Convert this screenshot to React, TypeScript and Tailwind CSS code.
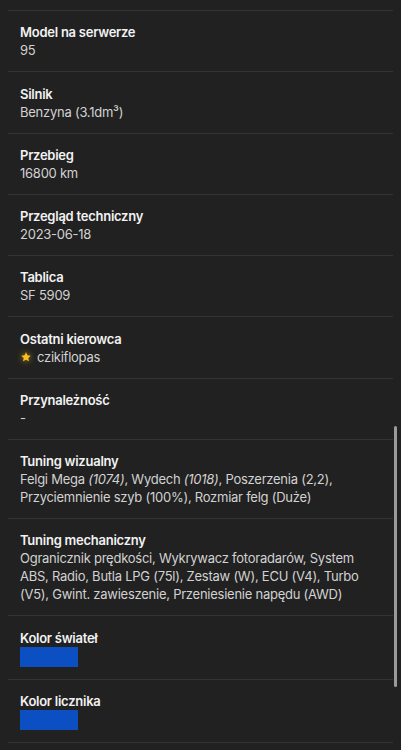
import type { ReactNode } from "react";

interface RowProps {
  label: string;
  children: ReactNode;
}

// Pojedynczy wiersz z etykietą i wartością
function InfoRow({ label, children }: RowProps) {
  return (
    <div className="border-b border-[#343434] px-3 pt-[12.25px] pb-3 tracking-[-0.25px]">
      <div className="text-[13px] leading-[18px] font-semibold text-[#f2f2f2]">{label}</div>
      <div className="text-[13px] leading-[18px] text-[#d2d2d2]">{children}</div>
    </div>
  );
}

function Swatch({ color }: { color: string }) {
  return <div className="h-5 w-[58px]" style={{ backgroundColor: color }} />;
}

function Star() {
  return (
    <svg viewBox="0 0 24 24" className="h-[12px] w-[12px] drop-shadow-[0_0_3px_rgba(250,190,30,0.7)]">
      <path
        d="M12 2.5l2.9 6.1 6.6.8-4.9 4.6 1.3 6.6L12 17.3l-5.9 3.3 1.3-6.6-4.9-4.6 6.6-.8z"
        fill="#f7c21b"
      />
    </svg>
  );
}

export default function App() {
  return (
    <div
      className="relative min-h-[750px] overflow-hidden bg-[#212121]"
      style={{ fontFamily: "Inter, 'Noto Sans', sans-serif" }}
    >
      <div className="mx-2">
        <div className="h-[11px] border-b border-[#343434]" />
        <InfoRow label="Model na serwerze">95</InfoRow>
        <InfoRow label="Silnik">Benzyna (3.1dm³)</InfoRow>
        <InfoRow label="Przebieg">16800 km</InfoRow>
        <InfoRow label="Przegląd techniczny">2023-06-18</InfoRow>
        <InfoRow label="Tablica">SF 5909</InfoRow>
        <InfoRow label="Ostatni kierowca">
          <span className="flex items-center gap-[5px]">
            <Star />
            czikiflopas
          </span>
        </InfoRow>
        <InfoRow label="Przynależność">-</InfoRow>
        <InfoRow label="Tuning wizualny">
          Felgi Mega <i>(1074)</i>, Wydech <i>(1018)</i>, Poszerzenia (2,2), Przyciemnienie szyb (100%),
          Rozmiar felg (Duże)
        </InfoRow>
        <InfoRow label="Tuning mechaniczny">
          Ogranicznik prędkości, Wykrywacz fotoradarów, System ABS, Radio, Butla LPG (75l), Zestaw (W),
          ECU (V4), Turbo (V5), Gwint. zawieszenie, Przeniesienie napędu (AWD)
        </InfoRow>
        <InfoRow label="Kolor świateł">
          <Swatch color="#0b4fc2" />
        </InfoRow>
        <InfoRow label="Kolor licznika">
          <Swatch color="#0b4fc2" />
        </InfoRow>
      </div>

      {/* pasek przewijania */}
      <div className="absolute top-[426px] right-[4px] h-[261px] w-[3px] rounded-full bg-[#9a9a9a]" />
    </div>
  );
}
